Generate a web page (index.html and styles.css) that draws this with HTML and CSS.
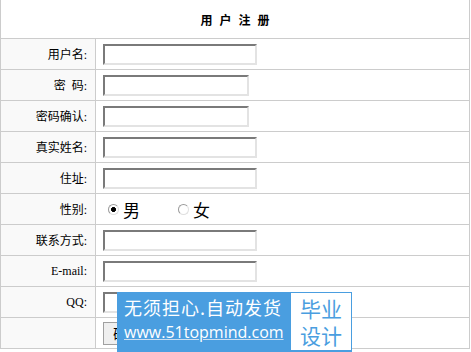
FILE: index.html
```html
<!DOCTYPE html>
<html lang="zh-CN">
<head>
    <meta charset="UTF-8">
    <title>用户注册</title>
    <link rel="stylesheet" href="styles.css">
</head>
<body>

    <form class="reg-form">
        <table class="reg-table">
            <colgroup>
                <col class="reg-col-label">
                <col>
            </colgroup>
            <tr>
                <td colspan="2" class="reg-title">用户注册</td>
            </tr>
            <tr>
                <td class="reg-label">用户名:</td>
                <td class="reg-field"><input type="text" class="reg-input" autofocus></td>
            </tr>
            <tr>
                <td class="reg-label">密&nbsp;&nbsp;码:</td>
                <td class="reg-field"><input type="password" class="reg-input reg-short"></td>
            </tr>
            <tr>
                <td class="reg-label">密码确认:</td>
                <td class="reg-field"><input type="password" class="reg-input reg-short"></td>
            </tr>
            <tr>
                <td class="reg-label">真实姓名:</td>
                <td class="reg-field"><input type="text" class="reg-input"></td>
            </tr>
            <tr>
                <td class="reg-label">住址:</td>
                <td class="reg-field"><input type="text" class="reg-input"></td>
            </tr>
            <tr>
                <td class="reg-label">性别:</td>
                <td class="reg-field">
                    <label class="reg-radio"><input type="radio" name="sex" checked>男</label>
                    <label class="reg-radio"><input type="radio" name="sex">女</label>
                </td>
            </tr>
            <tr>
                <td class="reg-label">联系方式:</td>
                <td class="reg-field"><input type="text" class="reg-input"></td>
            </tr>
            <tr>
                <td class="reg-label">E-mail:</td>
                <td class="reg-field"><input type="text" class="reg-input"></td>
            </tr>
            <tr>
                <td class="reg-label">QQ:</td>
                <td class="reg-field"><input type="text" class="reg-input"></td>
            </tr>
            <tr>
                <td class="reg-label"></td>
                <td class="reg-field">
                    <button type="submit" class="reg-btn">确定</button>
                </td>
            </tr>
        </table>
    </form>

    <!-- watermark over the form -->
    <div class="ad-box">
        <div class="ad-left">
            <div class="ad-slogan">无须担心.自动发货</div>
            <div class="ad-url">www.51topmind.com</div>
        </div>
        <div class="ad-right">毕业<br>设计</div>
    </div>

</body>
</html>
```

FILE: styles.css
```css
body {
    margin: 0;
    background-color: #ffffff;
    font-family: "Liberation Serif", "Noto Sans CJK SC", serif;
    font-size: 12px;
    color: #000;
}

.reg-form {
    margin: 0;
}

.reg-table {
    width: 470px;
    border-collapse: collapse;
    table-layout: fixed;
}

.reg-col-label {
    width: 95px;
}

.reg-table td {
    border: 1px solid #cccccc;
    height: 30px;
    padding: 0;
}

.reg-title {
    height: 38px !important;
    border-top: none !important;
    text-align: center;
    font-family: "Noto Sans CJK SC", sans-serif;
    font-weight: bold;
    font-size: 12px;
    letter-spacing: 7px;
    text-indent: 7px;
    background-color: #fff;
}

.reg-label {
    padding-right: 8px !important;
    text-align: right;
    background-color: #f9f9f9;
    white-space: nowrap;
}

.reg-field {
    padding-left: 7px !important;
    background-color: #fff;
}

.reg-input {
    display: block;
    box-sizing: border-box;
    width: 154px;
    height: 21px;
    margin: 0;
    padding: 0 2px;
    border-top: 2px solid #7a7a7a;
    border-left: 2px solid #7a7a7a;
    border-right: 2px solid #e3e3e3;
    border-bottom: 2px solid #e3e3e3;
    background-color: #fff;
    outline: none;
    font-size: 12px;
}

.reg-short {
    width: 146px;
}

.reg-radio {
    display: inline-flex;
    align-items: center;
    font-family: "Noto Sans CJK SC", sans-serif;
    font-size: 17px;
    margin-right: 30px;
}

.reg-radio input {
    appearance: none;
    box-sizing: border-box;
    width: 11px;
    height: 11px;
    margin: 0 4px 0 5px;
    border: 1px solid #9a9a9a;
    border-right-color: #e0e0e0;
    border-bottom-color: #e0e0e0;
    border-radius: 50%;
    background-color: #fff;
}

.reg-radio input:checked {
    background: radial-gradient(circle, #000 0 2.2px, #fff 2.6px);
}

.reg-btn {
    height: 23px;
    padding: 0 9px;
    margin: 0;
    background-color: #efefef;
    border: 1px solid #a0a0a0;
    border-radius: 0;
    font-family: "Noto Sans CJK SC", sans-serif;
    font-size: 14px;
    line-height: 20px;
}

.ad-box {
    position: absolute;
    left: 117px;
    top: 292px;
    width: 235px;
    height: 60px;
    background-color: #4a9ee0;
    display: flex;
    justify-content: space-between;
    font-family: "Noto Sans CJK SC", sans-serif;
}

.ad-left {
    display: flex;
    flex-direction: column;
    padding: 2px 0 0 7px;
    color: #fff;
}

.ad-slogan {
    font-size: 18px;
    line-height: 26px;
    letter-spacing: 1px;
}

.ad-url {
    font-family: "Open Sans", "Noto Sans", sans-serif;
    font-size: 16px;
    line-height: 24px;
    text-decoration: underline;
    text-decoration-color: #c9def2;
}

.ad-right {
    width: 60px;
    margin: 1px 1px 2px 0;
    background-color: #fff;
    color: #4a9ee0;
    font-size: 21px;
    line-height: 27px;
    text-align: center;
    padding-top: 2px;
    box-sizing: border-box;
}
```
